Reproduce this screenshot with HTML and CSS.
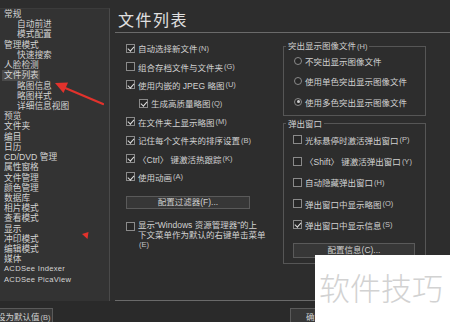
FILE: index.html
```html
<!DOCTYPE html>
<html lang="zh-CN">
<head>
    <meta charset="UTF-8">
    <title>选项 - 文件列表</title>
    <link rel="stylesheet" href="styles.css">
</head>
<body>
    <div class="window">
        <div class="main">
            <ul class="tree">
                <li>常规</li>
                <li class="sub">自动前进</li>
                <li class="sub">模式配置</li>
                <li>管理模式</li>
                <li class="sub">快速搜索</li>
                <li>人脸检测</li>
                <li class="sel"><span>文件列表</span></li>
                <li class="sub">略图信息</li>
                <li class="sub">略图样式</li>
                <li class="sub">详细信息视图</li>
                <li>预览</li>
                <li>文件夹</li>
                <li>编目</li>
                <li>日历</li>
                <li>CD/DVD 管理</li>
                <li>属性窗格</li>
                <li>文件管理</li>
                <li>颜色管理</li>
                <li>数据库</li>
                <li>相片模式</li>
                <li>查看模式</li>
                <li>显示</li>
                <li>冲印模式</li>
                <li>编辑模式</li>
                <li>媒体</li>
                <li class="latin">ACDSee Indexer</li>
                <li class="latin">ACDSee PicaView</li>
            </ul>

            <div class="pane">
                <h1 class="title">文件列表</h1>
                <div class="cols">
                    <div class="col-left">
                        <label class="check"><span class="cb on"></span>自动选择新文件<span class="key">(N)</span></label>
                        <label class="check"><span class="cb"></span>组合存档文件与文件夹<span class="key">(G)</span></label>
                        <label class="check"><span class="cb on"></span>使用内嵌的 JPEG 略图<span class="key">(U)</span></label>
                        <label class="check indent"><span class="cb on"></span>生成高质量略图<span class="key">(Q)</span></label>
                        <label class="check"><span class="cb on"></span>在文件夹上显示略图<span class="key">(M)</span></label>
                        <label class="check"><span class="cb on"></span>记住每个文件夹的排序设置<span class="key">(B)</span></label>
                        <label class="check"><span class="cb on"></span>〈Ctrl〉 键激活热跟踪<span class="key">(K)</span></label>
                        <label class="check"><span class="cb on"></span>使用动画<span class="key">(A)</span></label>
                        <button class="btn btn-filter">配置过滤器(F)...</button>
                        <label class="multi"><span class="cb"></span><span class="lines">显示“Windows 资源管理器”的上<br>下文菜单作为默认的右键单击菜单<br><span class="key">(E)</span></span></label>
                    </div>

                    <div class="col-right">
                        <fieldset class="group">
                            <legend>突出显示图像文件<span class="key">(H)</span></legend>
                            <label class="opt"><span class="rb"></span>不突出显示图像文件</label>
                            <label class="opt"><span class="rb"></span>使用单色突出显示图像文件</label>
                            <label class="opt"><span class="rb on"></span>使用多色突出显示图像文件</label>
                        </fieldset>
                        <fieldset class="group popup">
                            <legend>弹出窗口</legend>
                            <label class="opt"><span class="cb"></span>光标悬停时激活弹出窗口<span class="key">(P)</span></label>
                            <label class="opt"><span class="cb"></span>〈Shift〉 键激活弹出窗口<span class="key">(Y)</span></label>
                            <label class="opt"><span class="cb"></span>自动隐藏弹出窗口<span class="key">(H)</span></label>
                            <label class="opt"><span class="cb"></span>弹出窗口中显示略图<span class="key">(O)</span></label>
                            <label class="opt"><span class="cb on"></span>弹出窗口中显示信息<span class="key">(S)</span></label>
                            <button class="btn btn-info">配置信息(C)...</button>
                        </fieldset>
                    </div>
                </div>
            </div>
        </div>

        <div class="footer">
            <button class="btn btn-default">设为默认值<span class="key">(B)</span></button>
            <button class="btn btn-ok">确定</button>
        </div>

        <!-- 红色标注 -->
        <svg class="arrow" width="60" height="32" viewBox="0 0 60 32">
            <line x1="53" y1="26" x2="14" y2="9.5" stroke="#e2322c" stroke-width="2.2" stroke-linecap="round"/>
            <polygon points="5,5 18,4.6 13.5,15" fill="#e2322c"/>
        </svg>
        <svg class="mark" width="10" height="12" viewBox="0 0 10 12">
            <polygon points="2,4 8.5,2 7.5,9" fill="#e2322c"/>
        </svg>

        <div class="watermark">软件技巧</div>
    </div>
</body>
</html>
```

FILE: styles.css
```css
* {
    margin: 0;
    padding: 0;
    box-sizing: border-box;
}

body {
    width: 450px;
    height: 322px;
    overflow: hidden;
    background: #2d2d2d;
    color: #d2d2d2;
    font-family: "Liberation Sans", "Noto Sans CJK SC", sans-serif;
    font-size: 8.5px;
}

.window {
    position: relative;
    height: 322px;
    display: flex;
    flex-direction: column;
}

.main {
    display: flex;
    height: 301px;
}

/* 左侧树 */
.tree {
    list-style: none;
    width: 110px;
    margin-top: 8px;
    background: #333333;
    border-top: 1px solid #3b3b3b;
    border-right: 1px solid #4a4a4a;
    flex: none;
}

.tree li {
    height: 10.23px;
    line-height: 10.23px;
    font-size: 8.7px;
    padding-left: 4px;
    white-space: nowrap;
    color: #d4d4d4;
}

.tree li.sub {
    padding-left: 17px;
}

.tree li.sel span {
    display: inline-block;
    background: #4a4a4a;
    margin-left: -2px;
    padding: 0 1px 0 2px;
}

.tree li.latin {
    font-size: 7.6px;
    letter-spacing: 0.3px;
}

/* 右侧面板 */
.pane {
    flex: 1;
    margin-left: 5px;
    border-bottom: 1px solid #6a6a6a;
}

.title {
    font-family: "Noto Sans CJK SC", sans-serif;
    font-size: 16px;
    font-weight: normal;
    letter-spacing: 1.5px;
    line-height: 22px;
    padding: 8px 0 2px 3px;
    border-bottom: 1px solid #6a6a6a;
    color: #e0e0e0;
}

.cols {
    display: flex;
    padding-left: 11px;
}

.col-left {
    width: 157px;
    padding-top: 6px;
}

.col-right {
    width: 143px;
    padding-top: 9px;
}

.check {
    display: flex;
    align-items: center;
    height: 18.4px;
    white-space: nowrap;
}

.check.indent {
    padding-left: 13px;
}

.key {
    font-size: 7.5px;
    margin-left: 1px;
    color: #c6c6c6;
}

.cb {
    position: relative;
    flex: none;
    width: 9px;
    height: 9px;
    margin-right: 3px;
    border: 1px solid #8a8a8a;
    background: #272727;
}

.cb.on::after {
    content: "";
    position: absolute;
    left: 2.3px;
    top: 0.2px;
    width: 2.6px;
    height: 5px;
    border: solid #e0e0e0;
    border-width: 0 1.4px 1.4px 0;
    transform: rotate(42deg);
}

.rb {
    position: relative;
    flex: none;
    width: 8px;
    height: 8px;
    margin: 0 3px 0 1px;
    border-radius: 50%;
    border: 1px solid #8a8a8a;
    background: #272727;
}

.rb.on::after {
    content: "";
    position: absolute;
    left: 1.5px;
    top: 1.5px;
    width: 3px;
    height: 3px;
    border-radius: 50%;
    background: #cfcfcf;
}

.btn {
    display: block;
    padding: 0;
    border: 1px solid #5a5a5a;
    background: #373737;
    color: #d0d0d0;
    font-family: inherit;
    font-size: 8.5px;
    text-align: center;
}

.btn-filter {
    width: 124px;
    height: 13px;
    line-height: 11px;
    margin-top: 10px;
}

.multi {
    display: flex;
    align-items: flex-start;
    margin-top: 12px;
}

.multi .cb {
    margin-top: 0.5px;
}

.multi .lines {
    line-height: 9.5px;
    white-space: nowrap;
}

/* 分组框 */
.group {
    border: 1px solid #565656;
    padding: 0 9px 3px;
    min-width: 0;
}

.group legend {
    line-height: 8px;
    padding: 0 2px;
    margin-left: -7px;
    color: #d0d0d0;
}

.opt {
    display: flex;
    align-items: center;
    height: 20.3px;
    white-space: nowrap;
}

.group.popup {
    margin-top: 4px;
    padding-top: 1.5px;
    padding-bottom: 5px;
}

.popup .opt {
    height: 21.2px;
}

.btn-info {
    width: 122px;
    height: 15px;
    line-height: 13px;
    margin-top: 7.5px;
}

/* 底部按钮 */
.footer {
    display: flex;
    height: 21px;
    padding-top: 7px;
    background: #2a2a2a;
}

.btn-default {
    width: 61px;
    height: 18px;
    margin-left: -8px;
    padding-left: 4px;
    text-align: left;
    line-height: 16px;
}

.btn-ok {
    width: 64px;
    height: 18px;
    margin-left: auto;
    margin-right: 96px;
    padding-left: 15px;
    text-align: left;
    line-height: 16px;
}

/* 标注与水印 */
.arrow {
    position: absolute;
    left: 50px;
    top: 78px;
}

.mark {
    position: absolute;
    left: 80px;
    top: 230px;
}

.watermark {
    position: absolute;
    left: 315px;
    top: 255px;
    width: 135px;
    height: 67px;
    padding: 16px 0 0 4px;
    background: #ffffff;
    color: #d2d2d2;
    font-family: "Noto Sans CJK SC", sans-serif;
    font-weight: 300;
    font-size: 31px;
    line-height: 31px;
    white-space: nowrap;
}
```
